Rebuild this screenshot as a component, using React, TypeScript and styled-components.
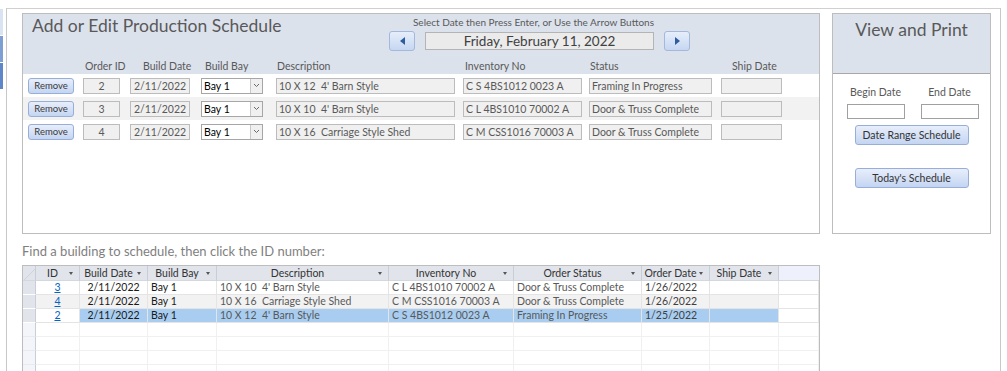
import { FC } from "react";
import styled, { createGlobalStyle } from "styled-components";

const GlobalStyle = createGlobalStyle`
  html, body {
    margin: 0;
    padding: 0;
    background: #ffffff;
    font-family: "Lato", "Liberation Sans", sans-serif;
  }
`;

const FONT = `"Lato", "Liberation Sans", sans-serif`;
const ROW_COLUMNS = "55px 47px 71px 75px 187px 126px 132px 61px";
const SHEET_COLUMNS = "13px 44px 68px 69px 172px 125px 128px 68px 69px 1fr";

const SPage = styled.div`
  display: flex;
  height: 371px;
  overflow: hidden;
`;

const SNavStrip = styled.div`
  width: 3px;
  margin: 9px 3px 0 0;
  display: flex;
  flex-direction: column;
  gap: 1px;
`;

const SNavSegment = styled.div<{ $tone: string }>`
  height: 26px;
  background: ${(p) => p.$tone};
`;

const SFrame = styled.div`
  width: 995px;
  margin-top: 8px;
  box-sizing: border-box;
  border-top: 1px solid #d0d0d0;
  border-left: 1px solid #c8c8c8;
  border-right: 1px solid #c8c8c8;
  padding: 4px 0 0 15px;
  overflow: hidden;
`;

const STopRow = styled.div`
  display: flex;
  gap: 12px;
`;

const SPanel = styled.div<{ $width: number }>`
  width: ${(p) => p.$width}px;
  height: 221px;
  box-sizing: border-box;
  border: 1px solid #bdbdbd;
  display: flex;
  flex-direction: column;
`;

const SPanelHeader = styled.div`
  height: 60px;
  background: #dce2ec;
  display: flex;
  flex-direction: column;
`;

const SHeaderTop = styled.div`
  height: 43px;
  display: flex;
  padding-left: 9px;
`;

const STitle = styled.div`
  flex: 0 0 356px;
  font-size: 17.5px;
  line-height: 22px;
  margin-top: 1px;
  color: #595959;
`;

const SDateNav = styled.div`
  width: 303px;
  display: flex;
  flex-direction: column;
  align-items: center;
`;

const SNavCaption = styled.div`
  font-size: 10px;
  line-height: 13px;
  margin-top: 2px;
  padding-right: 12px;
  color: #595959;
`;

const SNavControls = styled.div`
  display: flex;
  align-items: center;
  gap: 10px;
  margin-top: 2px;
`;

const SArrowButton = styled.div`
  width: 26px;
  height: 20px;
  box-sizing: border-box;
  border: 1px solid #a3b8dc;
  border-radius: 3px;
  background: linear-gradient(#e6eefb, #c6d7f2);
  display: flex;
  align-items: center;
  justify-content: center;
`;

const SArrow = styled.div<{ $dir: "left" | "right" }>`
  width: 0;
  height: 0;
  border-top: 4px solid transparent;
  border-bottom: 4px solid transparent;
  ${(p) =>
    p.$dir === "left"
      ? "border-right: 5px solid #2e5c9e;"
      : "border-left: 5px solid #2e5c9e;"}
`;

const SDateBox = styled.div`
  width: 229px;
  height: 18px;
  box-sizing: border-box;
  border: 1px solid #b4b4b4;
  background: #ebebeb;
  font-size: 13.5px;
  line-height: 16px;
  text-align: center;
  color: #404040;
`;

const SGridRow = styled.div<{ $shade?: boolean }>`
  display: grid;
  grid-template-columns: ${ROW_COLUMNS};
  padding-left: 5px;
  background: ${(p) => (p.$shade ? "#f2f2f2" : "transparent")};
`;

const SLabelRow = styled(SGridRow)`
  height: 17px;
  align-items: end;
`;

const SColLabel = styled.div<{ $indent: number }>`
  padding-left: ${(p) => p.$indent}px;
  font-size: 10.5px;
  line-height: 13px;
  padding-bottom: 1px;
  color: #595959;
  white-space: nowrap;
`;

const SScheduleRow = styled(SGridRow)`
  height: 23px;
  align-items: center;
`;

const SRemoveButton = styled.div`
  width: 46px;
  height: 16px;
  box-sizing: border-box;
  border: 1px solid #97afd8;
  border-radius: 3px;
  background: linear-gradient(#e8eefb, #c4d5f2);
  font-size: 9.5px;
  line-height: 14px;
  text-align: center;
  color: #3a3a3a;
`;

const SFieldBox = styled.div<{ $width: number; $center?: boolean }>`
  width: ${(p) => p.$width}px;
  height: 16px;
  box-sizing: border-box;
  border: 1px solid #bcbcbc;
  background: #f0f0f0;
  padding: 0 2px;
  font-size: 10.5px;
  line-height: 14px;
  color: #595959;
  text-align: ${(p) => (p.$center ? "center" : "left")};
  white-space: pre;
  overflow: hidden;
`;

const SCombo = styled.div`
  width: 62px;
  height: 16px;
  box-sizing: border-box;
  border: 1px solid #a6a6a6;
  background: #ffffff;
  display: flex;
`;

const SComboText = styled.div`
  flex: 1;
  padding-left: 2px;
  font-size: 10.5px;
  line-height: 14px;
  color: #000000;
`;

const SComboButton = styled.div`
  width: 11px;
  border-left: 1px solid #c8c8c8;
  background: #f0f0f0;
  display: flex;
  align-items: center;
  justify-content: center;
`;

const SSideHeader = styled.div`
  height: 60px;
  box-sizing: border-box;
  background: #dce2ec;
  border-bottom: 1px solid #a8a8a8;
  text-align: center;
  font-size: 17.5px;
  line-height: 22px;
  padding-top: 5px;
  color: #595959;
`;

const SSideBody = styled.div`
  display: flex;
  flex-direction: column;
  align-items: center;
`;

const SDateFields = styled.div`
  display: flex;
  gap: 16px;
  margin-top: 12px;
  padding-left: 2px;
`;

const SDateField = styled.div`
  width: 58px;
  display: flex;
  flex-direction: column;
  align-items: center;
  gap: 5px;
`;

const SFieldLabel = styled.div`
  font-size: 10.5px;
  line-height: 13px;
  color: #595959;
  white-space: nowrap;
`;

const SDateInput = styled.div`
  width: 58px;
  height: 15px;
  box-sizing: border-box;
  border: 1px solid #a0a0a0;
  background: #ffffff;
`;

const SActionButton = styled.div<{ $top: number }>`
  width: 114px;
  height: 20px;
  margin-top: ${(p) => p.$top}px;
  box-sizing: border-box;
  border: 1px solid #97afd8;
  border-radius: 3px;
  background: linear-gradient(#e8eefb, #c4d5f2);
  font-size: 10.5px;
  line-height: 18px;
  text-align: center;
  color: #333333;
`;

const SHint = styled.div`
  margin-top: 9px;
  font-size: 13px;
  line-height: 16px;
  color: #7f7f7f;
`;

const SSheet = styled.div`
  width: 798px;
  margin-top: 6px;
  box-sizing: border-box;
  border-top: 1px solid #bdbdbd;
  border-left: 1px solid #bdbdbd;
  border-right: 1px solid #bdbdbd;
  font-family: ${FONT};
`;

const SSheetRow = styled.div<{ $height: number }>`
  display: grid;
  grid-template-columns: ${SHEET_COLUMNS};
  height: ${(p) => p.$height}px;
`;

const SHeadCell = styled.div<{ $rest?: boolean }>`
  display: flex;
  align-items: center;
  box-sizing: border-box;
  background: ${(p) => (p.$rest ? "#eef0fb" : "#e1e4ea")};
  border-right: ${(p) => (p.$rest ? "none" : "1px solid #c9ced6")};
  border-bottom: 1px solid #d3d7de;
  font-size: 10.5px;
  color: #333333;
  padding-right: 6px;
`;

const SHeadText = styled.span`
  flex: 1;
  text-align: center;
`;

const SSortArrow = styled.span`
  width: 0;
  height: 0;
  border-left: 2px solid transparent;
  border-right: 2px solid transparent;
  border-top: 3px solid #555555;
`;

const SCorner = styled.div`
  box-sizing: border-box;
  background: linear-gradient(135deg, #e1e4ea 55%, #c8ccd4 56%, #e1e4ea 62%);
  border-right: 1px solid #c9ced6;
  border-bottom: 1px solid #d3d7de;
`;

const SSelector = styled.div<{ $empty?: boolean }>`
  box-sizing: border-box;
  background: ${(p) => (p.$empty ? "#f3f5fb" : "#e1e4ea")};
  border-right: 1px solid #c9ced6;
  border-bottom: 1px solid ${(p) => (p.$empty ? "#e8eaf0" : "#ffffff")};
`;

const SCell = styled.div<{
  $bg: string;
  $align?: "left" | "center";
  $ink?: string;
  $faint?: boolean;
}>`
  box-sizing: border-box;
  background: ${(p) => p.$bg};
  border-right: 1px solid ${(p) => (p.$faint ? "#f0f0f0" : "#e4e4e4")};
  border-bottom: 1px solid ${(p) => (p.$faint ? "#f0f0f0" : "#e4e4e4")};
  padding: 0 3px;
  font-size: 10.5px;
  line-height: 13px;
  text-align: ${(p) => p.$align || "left"};
  color: ${(p) => p.$ink || "#595959"};
  white-space: pre;
  overflow: hidden;
`;

const SIdLink = styled.span`
  color: #0563c1;
  text-decoration: underline;
`;

interface ScheduleItem {
  id: string;
  date: string;
  bay: string;
  desc: string;
  inv: string;
  status: string;
  orderDate: string;
}

const scheduled: ScheduleItem[] = [
  { id: "2", date: "2/11/2022", bay: "Bay 1", desc: "10 X 12  4' Barn Style", inv: "C S 4BS1012 0023 A", status: "Framing In Progress", orderDate: "1/25/2022" },
  { id: "3", date: "2/11/2022", bay: "Bay 1", desc: "10 X 10  4' Barn Style", inv: "C L 4BS1010 70002 A", status: "Door & Truss Complete", orderDate: "1/26/2022" },
  { id: "4", date: "2/11/2022", bay: "Bay 1", desc: "10 X 16  Carriage Style Shed", inv: "C M CSS1016 70003 A", status: "Door & Truss Complete", orderDate: "1/26/2022" },
];

const sheetOrder = [scheduled[1], scheduled[2], scheduled[0]];

const labels: { text: string; indent: number }[] = [
  { text: "", indent: 0 },
  { text: "Order ID", indent: 2 },
  { text: "Build Date", indent: 13 },
  { text: "Build Bay", indent: 4 },
  { text: "Description", indent: 1 },
  { text: "Inventory No", indent: 2 },
  { text: "Status", indent: 1 },
  { text: "Ship Date", indent: 11 },
];

const sheetHeads = [
  "ID",
  "Build Date",
  "Build Bay",
  "Description",
  "Inventory No",
  "Order Status",
  "Order Date",
  "Ship Date",
];

const Chevron: FC = () => (
  <svg width="7" height="5" viewBox="0 0 7 5">
    <path d="M1 1 L3.5 3.5 L6 1" fill="none" stroke="#6a6a6a" strokeWidth="1" />
  </svg>
);

const ScheduleLine: FC<{ item: ScheduleItem; shade: boolean }> = ({ item, shade }) => (
  <SScheduleRow $shade={shade}>
    <SRemoveButton>Remove</SRemoveButton>
    <SFieldBox $width={37} $center>
      {item.id}
    </SFieldBox>
    <SFieldBox $width={60} $center>
      {item.date}
    </SFieldBox>
    <SCombo>
      <SComboText>{item.bay}</SComboText>
      <SComboButton>
        <Chevron />
      </SComboButton>
    </SCombo>
    <SFieldBox $width={179}>{item.desc}</SFieldBox>
    <SFieldBox $width={119}>{item.inv}</SFieldBox>
    <SFieldBox $width={123}>{item.status}</SFieldBox>
    <SFieldBox $width={61} />
  </SScheduleRow>
);

const SheetLine: FC<{ item: ScheduleItem; index: number; selected: boolean }> = ({
  item,
  index,
  selected,
}) => {
  const base = index === 1 ? "#f2f2f2" : "#ffffff";
  const bg = selected ? "#a8cdf0" : base;
  return (
    <SSheetRow $height={14}>
      <SSelector />
      <SCell $bg={base} $align="center">
        <SIdLink>{item.id}</SIdLink>
      </SCell>
      <SCell $bg={bg} $align="center" $ink="#1a1a1a">
        {item.date}
      </SCell>
      <SCell $bg={bg} $ink="#1a1a1a">
        {item.bay}
      </SCell>
      <SCell $bg={bg}>{item.desc}</SCell>
      <SCell $bg={bg}>{item.inv}</SCell>
      <SCell $bg={bg}>{item.status}</SCell>
      <SCell $bg={bg} $ink="#404040">
        {item.orderDate}
      </SCell>
      <SCell $bg={bg} />
      <SCell $bg="#ffffff" />
    </SSheetRow>
  );
};

const EmptyLine: FC = () => (
  <SSheetRow $height={14}>
    <SSelector $empty />
    {Array.from({ length: 9 }).map((_, i) => (
      <SCell key={i} $bg="#ffffff" $faint />
    ))}
  </SSheetRow>
);

export default function App() {
  return (
    <>
      <GlobalStyle />
      <SPage>
        <SNavStrip>
          <SNavSegment $tone="#d9e3f2" />
          <SNavSegment $tone="#7d9fd3" />
          <SNavSegment $tone="#5f86c6" />
        </SNavStrip>
        <SFrame>
          <STopRow>
            <SPanel $width={798}>
              <SPanelHeader>
                <SHeaderTop>
                  <STitle>Add or Edit Production Schedule</STitle>
                  <SDateNav>
                    <SNavCaption>
                      Select Date then Press Enter, or Use the Arrow Buttons
                    </SNavCaption>
                    <SNavControls>
                      <SArrowButton>
                        <SArrow $dir="left" />
                      </SArrowButton>
                      <SDateBox>Friday, February 11, 2022</SDateBox>
                      <SArrowButton>
                        <SArrow $dir="right" />
                      </SArrowButton>
                    </SNavControls>
                  </SDateNav>
                </SHeaderTop>
                <SLabelRow>
                  {labels.map((l, i) => (
                    <SColLabel key={i} $indent={l.indent}>
                      {l.text}
                    </SColLabel>
                  ))}
                </SLabelRow>
              </SPanelHeader>
              {scheduled.map((item, i) => (
                <ScheduleLine key={item.id} item={item} shade={i === 1} />
              ))}
            </SPanel>
            <SPanel $width={159}>
              <SSideHeader>View and Print</SSideHeader>
              <SSideBody>
                <SDateFields>
                  <SDateField>
                    <SFieldLabel>Begin Date</SFieldLabel>
                    <SDateInput />
                  </SDateField>
                  <SDateField>
                    <SFieldLabel>End Date</SFieldLabel>
                    <SDateInput />
                  </SDateField>
                </SDateFields>
                <SActionButton $top={6}>Date Range Schedule</SActionButton>
                <SActionButton $top={23}>Today's Schedule</SActionButton>
              </SSideBody>
            </SPanel>
          </STopRow>
          <SHint>Find a building to schedule, then click the ID number:</SHint>
          <SSheet>
            <SSheetRow $height={15}>
              <SCorner />
              {sheetHeads.map((h) => (
                <SHeadCell key={h}>
                  <SHeadText>{h}</SHeadText>
                  <SSortArrow />
                </SHeadCell>
              ))}
              <SHeadCell $rest />
            </SSheetRow>
            {sheetOrder.map((item, i) => (
              <SheetLine key={item.id} item={item} index={i} selected={i === 2} />
            ))}
            <EmptyLine />
            <EmptyLine />
            <EmptyLine />
            <EmptyLine />
          </SSheet>
        </SFrame>
      </SPage>
    </>
  );
}
